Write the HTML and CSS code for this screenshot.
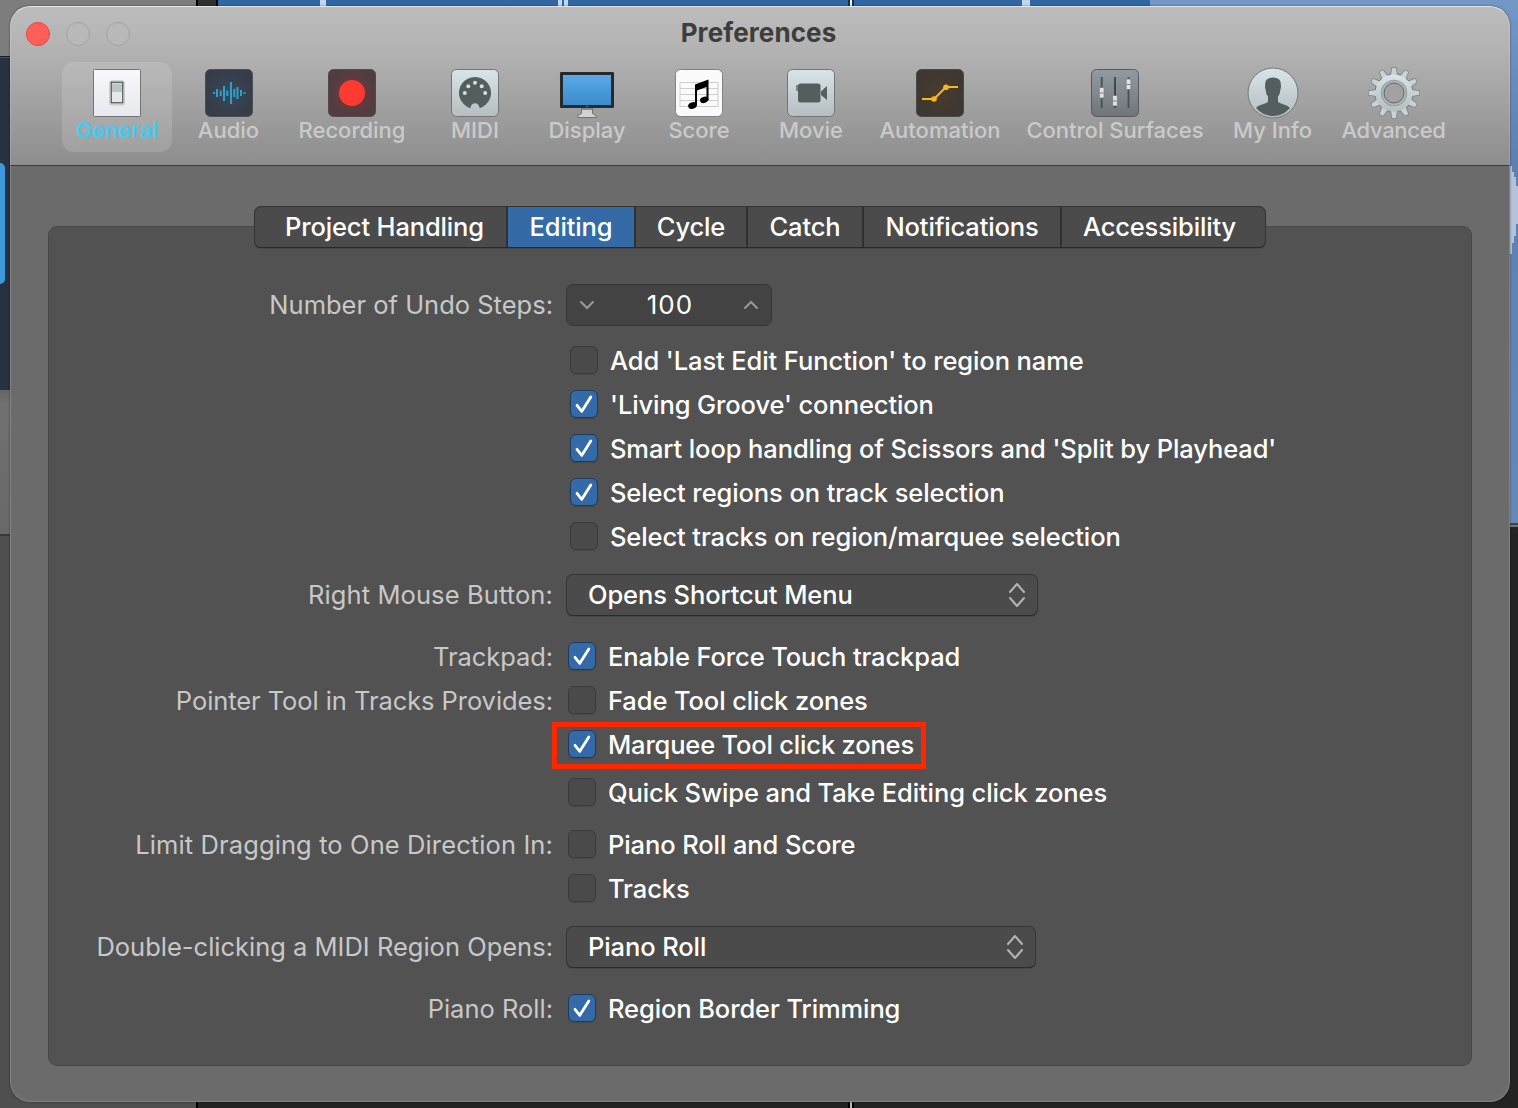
FILE: index.html
```html
<!DOCTYPE html>
<html lang="en">
<head>
<meta charset="utf-8">
<title>Preferences</title>
<link rel="stylesheet" href="styles.css">
</head>
<body>
<svg class="desktop" viewBox="0 0 1518 1108" aria-hidden="true">
  <defs>
    <linearGradient id="deskLeft" x1="0" y1="0" x2="0" y2="1"><stop offset="0" stop-color="#666"/><stop offset=".1" stop-color="#707070"/><stop offset="1" stop-color="#696969"/></linearGradient>
    <linearGradient id="deskRight" x1="0" y1="0" x2="0" y2="1"><stop offset="0" stop-color="#7398c6"/><stop offset=".3" stop-color="#5c80af"/><stop offset="1" stop-color="#6689b6"/></linearGradient>
  </defs>
  <rect width="1518" height="1108" fill="#232323"/>
  <rect width="196" height="56" fill="#7d7d7d"/>
  <rect y="56" width="20" height="334" fill="#263240"/>
  <rect y="56" width="20" height="1" fill="#171d25"/><rect y="57" width="20" height="1" fill="#465362"/>
  <rect x="-10" y="163" width="15" height="121" rx="5" fill="#3f98db"/>
  <rect y="390" width="20" height="144" fill="url(#deskLeft)"/>
  <rect y="534" width="20" height="2" fill="#393939"/>
  <rect y="536" width="196" height="572" fill="#4f4f4f"/>
  <rect x="196" width="2" height="1108" fill="#000"/>
  <rect x="198" width="18" height="30" fill="#303030"/><rect x="216" width="2" height="30" fill="#000"/>
  <rect x="218" width="932" height="30" fill="#3167a3"/>
  <path d="M320 0h6v20h-6zM558 0h4v20h-4zM564 0h4v20h-4zM1022 0h8v20h-8z" fill="#c2d6f0"/>
  <rect x="848" width="6" height="20" fill="#182f4a"/><rect x="850" width="2" height="20" fill="#eee"/>
  <rect x="1150" width="368" height="532" fill="url(#deskRight)"/>
  <path d="M1508 166h4v6h2v5h2v9h2v38h-2v12h-2v7h-2v11h-4z" fill="#b3c2d8"/>
  <rect x="1500" y="523" width="18" height="2" fill="#444"/>
  <rect x="1500" y="525" width="18" height="2" fill="#777"/><rect x="1500" y="527" width="18" height="6" fill="#252525"/>
  <rect x="848" y="1090" width="6" height="18" fill="#000"/><rect x="850" y="1090" width="2" height="18" fill="#bbb"/>
</svg>

<main class="window">
  <header class="toolbar">
    <div class="titlebar">
      <span class="light close"></span><span class="light"></span><span class="light"></span>
      <h1 class="title">Preferences</h1>
    </div>
    <nav class="tools">
      <a class="tool tool-general active">
        <svg class="icon" viewBox="0 0 52 52">
          <defs><linearGradient id="plate" x1="0" y1="0" x2="0" y2="1"><stop offset="0" stop-color="#f9f9fb"/><stop offset="1" stop-color="#e7e8ee"/></linearGradient></defs>
          <rect x="2.5" y="2.5" width="47" height="47" rx="1" fill="url(#plate)" stroke="#747474"/>
          <rect x="18.5" y="13.6" width="15" height="24.6" rx="2" fill="#aaa"/><rect x="19" y="13.8" width="14" height="23.6" rx="1.5" fill="#f2f2f2"/>
          <rect x="20.2" y="15.2" width="11.6" height="20.6" fill="#e4eaeb" stroke="#464a4d" stroke-width="1.2"/><rect x="21" y="16.5" width="10" height="8.5" fill="#bec5c7"/>
        </svg>
        <span class="name">General</span>
      </a>
      <a class="tool tool-audio">
        <svg class="icon" viewBox="0 0 52 52">
          <defs><radialGradient id="navy"><stop offset="0" stop-color="#3b475b"/><stop offset="1" stop-color="#363d48"/></radialGradient></defs>
          <rect x="2.5" y="2.5" width="47" height="47" rx="5" fill="url(#navy)" stroke="#494f57"/>
          <path d="M11 25v2M14 22v8M17.7 23.5v5.5M21 19v15M24.3 23.5v5.5M28 15v22M31.3 22v8M34.5 20v12M38 23v6M41.5 25v2" stroke="#2ba1ca" stroke-width="2"/>
        </svg>
        <span class="name">Audio</span>
      </a>
      <a class="tool tool-recording">
        <svg class="icon" viewBox="0 0 52 52">
          <defs><radialGradient id="wine"><stop offset="0" stop-color="#77383a"/><stop offset="1" stop-color="#503d41"/></radialGradient></defs>
          <rect x="2.5" y="2.5" width="47" height="47" rx="5" fill="url(#wine)" stroke="#56494d"/>
          <circle cx="26" cy="26" r="13" fill="#ff3a30"/>
        </svg>
        <span class="name">Recording</span>
      </a>
      <a class="tool tool-midi">
        <svg class="icon" viewBox="0 0 52 52">
          <defs><linearGradient id="pale" x1="0" y1="0" x2="0" y2="1"><stop offset="0" stop-color="#d8e5e8"/><stop offset="1" stop-color="#b5bdbf"/></linearGradient></defs>
          <rect x="2.5" y="2.5" width="47" height="47" rx="5" fill="url(#pale)" stroke="#707677"/>
          <path d="M21.3 41.2A16 16 0 1 1 30.7 41.2Q29.8 36.2 26 36.2Q22.2 36.2 21.3 41.2Z" fill="#535e5e"/>
          <g fill="#d4dfe1"><circle cx="15.8" cy="26" r="2"/><circle cx="19.3" cy="19.3" r="2"/><circle cx="26" cy="15.8" r="2"/><circle cx="32.7" cy="19.3" r="2"/><circle cx="36.2" cy="26" r="2"/></g>
        </svg>
        <span class="name">MIDI</span>
      </a>
      <a class="tool tool-display">
        <svg class="icon icon-wide" viewBox="0 0 56 52">
          <defs><linearGradient id="screen" x1="0" y1="0" x2="0" y2="1"><stop offset="0" stop-color="#5ba9e9"/><stop offset="1" stop-color="#3a8ccc"/></linearGradient></defs>
          <path d="M22.5 41h11v5.5l4 2.5v1.5h-19V49l4-2.5z" fill="#d2d2d2" stroke="#737373"/>
          <path d="M23 41h10v2H23z" fill="#888"/>
          <rect x="1" y="5" width="54" height="36" rx="1.2" fill="#272a2d"/><rect x="4" y="8" width="48" height="30" fill="url(#screen)"/>
          <circle cx="28" cy="39.5" r=".8" fill="#888"/>
        </svg>
        <span class="name">Display</span>
      </a>
      <a class="tool tool-score">
        <svg class="icon" viewBox="0 0 52 52">
          <rect x="2.5" y="2.5" width="47" height="47" rx="5" fill="#fafafa" stroke="#818181"/>
          <path d="M7 15.5h38M7 21.5h38M7 27.5h38M7 33.5h38M7 39.5h38M7 15v25M45 15v25" stroke="#cecece" fill="none"/>
          <path d="M22 17.5L35.5 12.5V33H33.5V20L24 23.5V38H22Z"/>
          <ellipse cx="19.5" cy="38.5" rx="4.5" ry="3.2" transform="rotate(-20 19.5 38.5)"/><ellipse cx="31.2" cy="32.8" rx="4.3" ry="3.1" transform="rotate(-20 31.2 32.8)"/>
        </svg>
        <span class="name">Score</span>
      </a>
      <a class="tool tool-movie">
        <svg class="icon" viewBox="0 0 52 52">
          <rect x="2.5" y="2.5" width="47" height="47" rx="5" fill="url(#pale)" stroke="#707677"/>
          <path d="M11 18h3v6h-3z" fill="#7d8687"/><rect x="13" y="16.5" width="22.5" height="19" rx="2.5" fill="#535e5e"/><path d="M36 24.5L42 19v14l-6-5z" fill="#535e5e"/>
        </svg>
        <span class="name">Movie</span>
      </a>
      <a class="tool tool-automation">
        <svg class="icon" viewBox="0 0 52 52">
          <defs><radialGradient id="umber"><stop offset="0" stop-color="#4a3a2d"/><stop offset="1" stop-color="#3d3831"/></radialGradient></defs>
          <rect x="2.5" y="2.5" width="47" height="47" rx="5" fill="url(#umber)" stroke="#4b4944"/>
          <path d="M8 32h12L32 20h12" fill="none" stroke="#fdb911" stroke-width="2"/><circle cx="20" cy="32" r="2.8" fill="#fdb911"/><circle cx="32" cy="20.2" r="2.8" fill="#fdb911"/>
        </svg>
        <span class="name">Automation</span>
      </a>
      <a class="tool tool-control">
        <svg class="icon" viewBox="0 0 52 52">
          <defs><linearGradient id="steel" x1="0" y1="0" x2="0" y2="1"><stop offset="0" stop-color="#929ba2"/><stop offset="1" stop-color="#70757b"/></linearGradient></defs>
          <rect x="2.5" y="2.5" width="47" height="47" rx="5" fill="url(#steel)" stroke="#565a5e"/>
          <path d="M12.7 10v31M39.5 10v31" stroke="#4c5054" stroke-width="1.8"/><path d="M26 10v31" stroke="#202224" stroke-width="1.3"/>
          <g fill="#e2e2e2" stroke="#777" stroke-width=".8"><rect x="10.3" y="20.5" width="4.8" height="10.5" rx="1"/><rect x="23.6" y="28.5" width="4.8" height="10.5" rx="1"/><rect x="37.1" y="12" width="4.8" height="10.5" rx="1"/></g>
          <path d="M11 26h3.5M24.2 34h3.5M37.8 17.5h3.5" stroke="#777"/>
        </svg>
        <span class="name">Control Surfaces</span>
      </a>
      <a class="tool tool-info">
        <svg class="icon" viewBox="0 0 52 52">
          <circle cx="26" cy="26" r="25" fill="url(#pale)" stroke="#73797b"/>
          <path d="M9 41C12 37 19 37.5 21 34.5V29.5Q18.8 27 18.6 22.5Q17.6 20 18.2 18Q17.5 10.8 26 10.5Q34.5 10.8 33.8 18Q34.4 20 33.4 22.5Q33.2 27 31 29.5V34.5C33 37.5 40 37 43 41Q36 49 26 49T9 41Z" fill="#535e5e"/>
        </svg>
        <span class="name">My Info</span>
      </a>
      <a class="tool tool-advanced">
        <svg class="icon" viewBox="0 0 52 52">
          <defs><g id="teeth"><path d="M22.7 10L24 1.4Q24 .7 25 .7h2Q28 .7 28 1.4L29.3 10zM22.7 42L24 50.6Q24 51.3 25 51.3h2Q28 51.3 28 50.6L29.3 42z"/></g>
          <g id="cog"><use href="#teeth"/><use href="#teeth" transform="rotate(30 26 26)"/><use href="#teeth" transform="rotate(60 26 26)"/><use href="#teeth" transform="rotate(90 26 26)"/><use href="#teeth" transform="rotate(120 26 26)"/><use href="#teeth" transform="rotate(150 26 26)"/></g></defs>
          <g stroke="#767c7e" stroke-width="1.4" fill="#767c7e"><use href="#cog"/><circle cx="26" cy="26" r="18.8"/></g>
          <use href="#cog" fill="#c8d3d6"/><circle cx="26" cy="26" r="18.6" fill="url(#pale)"/>
          <circle cx="26" cy="26" r="12.6" fill="#aeb7ba" stroke="#9ba5a8" stroke-width="1.4"/>
          <circle cx="26" cy="26" r="10" fill="#a2a2a2" stroke="#626769" stroke-width="1"/>
        </svg>
        <span class="name">Advanced</span>
      </a>
    </nav>
  </header>

  <section class="content">
    <div class="tabs">
      <a class="tab tab-project">Project Handling</a><a class="tab tab-editing selected">Editing</a><a class="tab tab-cycle">Cycle</a><a class="tab tab-catch">Catch</a><a class="tab tab-notes">Notifications</a><a class="tab tab-access">Accessibility</a>
    </div>
    <form class="panel">
      <div class="row">
        <span class="label">Number of Undo Steps:</span>
        <div class="stepper">
          <svg class="chevron" viewBox="0 0 16 10"><path d="M2 2l6 6 6-6"/></svg>
          <span class="value">100</span>
          <svg class="chevron" viewBox="0 0 16 10"><path d="M2 8l6-6 6 6"/></svg>
        </div>
      </div>
      <div class="row gap-12"><span class="label"></span><span class="option inset"><i class="box"></i><span class="text">Add 'Last Edit Function' to region name</span></span></div>
      <div class="row"><span class="label"></span><span class="option inset"><i class="box on"><svg viewBox="0 0 28 28"><path d="M7 15.3l4.8 6L20.8 7"/></svg></i><span class="text">'Living Groove' connection</span></span></div>
      <div class="row"><span class="label"></span><span class="option inset"><i class="box on"><svg viewBox="0 0 28 28"><path d="M7 15.3l4.8 6L20.8 7"/></svg></i><span class="text">Smart loop handling of Scissors and 'Split by Playhead'</span></span></div>
      <div class="row"><span class="label"></span><span class="option inset"><i class="box on"><svg viewBox="0 0 28 28"><path d="M7 15.3l4.8 6L20.8 7"/></svg></i><span class="text">Select regions on track selection</span></span></div>
      <div class="row"><span class="label"></span><span class="option inset"><i class="box"></i><span class="text">Select tracks on region/marquee selection</span></span></div>
      <div class="row gap-14">
        <span class="label wide">Right Mouse Button:</span>
        <div class="select select-mouse"><span class="text">Opens Shortcut Menu</span><svg class="arrows" viewBox="0 0 18 26"><path d="M2 10l7-8 7 8M2 16l7 8 7-8"/></svg></div>
      </div>
      <div class="row gap-18"><span class="label tight">Trackpad:</span><span class="option"><i class="box on"><svg viewBox="0 0 28 28"><path d="M7 15.3l4.8 6L20.8 7"/></svg></i><span class="text">Enable Force Touch trackpad</span></span></div>
      <div class="row"><span class="label tight">Pointer Tool in Tracks Provides:</span><span class="option"><i class="box"></i><span class="text">Fade Tool click zones</span></span></div>
      <div class="row"><span class="label"></span><span class="option marked"><i class="box on"><svg viewBox="0 0 28 28"><path d="M7 15.3l4.8 6L20.8 7"/></svg></i><span class="text">Marquee Tool click zones</span></span></div>
      <div class="row gap-4"><span class="label"></span><span class="option"><i class="box"></i><span class="text">Quick Swipe and Take Editing click zones</span></span></div>
      <div class="row gap-8"><span class="label wide">Limit Dragging to One Direction In:</span><span class="option"><i class="box"></i><span class="text">Piano Roll and Score</span></span></div>
      <div class="row"><span class="label"></span><span class="option"><i class="box"></i><span class="text">Tracks</span></span></div>
      <div class="row gap-14">
        <span class="label">Double-clicking a MIDI Region Opens:</span>
        <div class="select select-region"><span class="text">Piano Roll</span><svg class="arrows" viewBox="0 0 18 26"><path d="M2 10l7-8 7 8M2 16l7 8 7-8"/></svg></div>
      </div>
      <div class="row gap-18"><span class="label">Piano Roll:</span><span class="option"><i class="box on"><svg viewBox="0 0 28 28"><path d="M7 15.3l4.8 6L20.8 7"/></svg></i><span class="text">Region Border Trimming</span></span></div>
    </form>
  </section>
</main>
</body>
</html>
```
FILE: styles.css
```css
*, *::before, *::after { box-sizing: border-box; }
body {
  margin: 0;
  width: 1518px;
  height: 1108px;
  overflow: hidden;
  position: relative;
  background: #232323;
  font-family: Inter, "Liberation Sans", sans-serif;
  font-size: 25.5px;
  color: #fff;
}
.desktop { position: absolute; left: 0; top: 0; width: 1518px; height: 1108px; }

.window {
  position: absolute;
  left: 10px;
  top: 6px;
  width: 1500px;
  height: 1096px;
  border-radius: 20px;
  overflow: hidden;
  background: #6b6b6b;
  box-shadow: 0 0 2px rgba(0, 0, 0, .55);
}
.window::after {
  content: "";
  position: absolute;
  inset: 0;
  border-radius: 20px;
  border: 1px solid rgba(255, 255, 255, .16);
  border-top-color: rgba(255, 255, 255, .6);
  pointer-events: none;
}

.toolbar {
  height: 160px;
  border-bottom: 1px solid #3b3b3b;
  background: linear-gradient(#bdbdbd, #b0b0b0 33%, #8d8d8d);
}
.titlebar { display: flex; align-items: center; gap: 16px; height: 56px; padding-left: 16px; }
.light { width: 24px; height: 24px; border-radius: 50%; background: #b9b9b9; border: 1px solid #a1a1a1; }
.light.close { background: #ff5f58; border-color: #e2463f; }
.title {
  flex: 1;
  margin: -3px 121px 0 -18px;
  text-align: center;
  font-size: 26px;
  font-weight: 700;
  line-height: 30px;
  letter-spacing: .1px;
  color: #3d3d3d;
}
.tools { display: flex; padding-left: 52px; }
.tool {
  height: 90px;
  padding-top: 5px;
  border-radius: 12px;
  display: flex;
  flex-direction: column;
  align-items: center;
}
.tool.active { background: rgba(255, 255, 255, .14); }
.tool-general { width: 110px; }
.tool-audio { width: 113px; }
.tool-recording { width: 134px; }
.tool-midi, .tool-display, .tool-score, .tool-movie { width: 112px; }
.tool-automation { width: 146px; }
.tool-control { width: 204px; }
.tool-info { width: 111px; }
.tool-advanced { width: 131px; }
.icon { width: 52px; height: 52px; flex: none; }
.icon-wide { width: 56px; }
.name {
  margin-top: -3px;
  font-size: 22px;
  font-weight: 500;
  line-height: 28px;
  white-space: nowrap;
  color: #cacaca;
}
.active .name { color: #34d0fb; }
.tool-advanced .name { letter-spacing: -.3px; }

.content { padding: 40px 38px 36px; height: 936px; }
.tabs {
  position: relative;
  z-index: 1;
  display: flex;
  width: 1012px;
  height: 42px;
  margin: 0 0 -22px 206px;
  border: 1px solid #333;
  border-bottom-color: #292929;
  border-radius: 7px;
  overflow: hidden;
  background: #4b4b4b;
  box-shadow: 0 1px 1px rgba(0, 0, 0, .15);
}
.tab {
  display: flex;
  align-items: center;
  justify-content: center;
  padding-bottom: 2px;
  border-right: 2px solid #303030;
  font-weight: 500;
  letter-spacing: -.15px;
  white-space: nowrap;
}
.tab:last-child { border-right: 0; }
.tab.selected { background: #346aa6; }
.tab-project { width: 253px; padding-left: 8px; }
.tab-editing { width: 128px; }
.tab-cycle { width: 112px; }
.tab-catch { width: 116px; }
.tab-notes { width: 198px; }
.tab-access { flex: 1; padding-right: 8px; }

.panel {
  height: 840px;
  margin: 0;
  padding-top: 56px;
  border: 1px solid #484848;
  border-radius: 9px;
  background: #525252;
}
.row { display: flex; align-items: center; height: 44px; white-space: nowrap; }
.gap-4 { margin-top: 4px; }
.gap-8 { margin-top: 8px; }
.gap-12 { margin-top: 12px; }
.gap-14 { margin-top: 14px; }
.gap-18 { margin-top: 18px; }
.label { width: 504px; margin-right: 13px; padding-bottom: 2px; text-align: right; color: #c8c8c8; }
.label.wide { letter-spacing: .11px; }
.label.tight { letter-spacing: -.07px; }
.text { padding-bottom: 2px; letter-spacing: -.1px; }
.option { position: relative; display: flex; align-items: center; gap: 12px; height: 44px; margin-left: 2px; font-weight: 500; }
.option.inset { margin-left: 4px; }
.marked .text { letter-spacing: -.18px; }
.marked::before {
  content: "";
  position: absolute;
  left: -16px;
  top: -1px;
  width: 374px;
  height: 47px;
  border: 5px solid #ff2600;
}
.box {
  position: relative;
  top: -1px;
  width: 28px;
  height: 28px;
  border: 1px solid #3a3a3a;
  border-radius: 6px;
  background: #4a4a4a;
  box-shadow: 0 1px 1px rgba(0, 0, 0, .12);
}
.box.on { background: #346aa8; border-color: #203a5c; }
.box svg { display: block; width: 28px; height: 28px; margin: -1px; }
.box path { fill: none; stroke: #fff; stroke-width: 2.8; stroke-linecap: round; stroke-linejoin: round; }
.stepper {
  display: flex;
  align-items: center;
  justify-content: space-between;
  width: 206px;
  height: 42px;
  padding: 0 12px;
  border: 1px solid #353535;
  border-radius: 7px;
  background: #434343;
}
.value { padding: 0 0 2px 2px; font-size: 26px; letter-spacing: 1px; }
.chevron { width: 16px; height: 10px; fill: none; stroke: #999; stroke-width: 2; stroke-linecap: round; }
.select {
  display: flex;
  align-items: center;
  justify-content: space-between;
  height: 42px;
  padding: 0 11px 0 21px;
  border: 1px solid #363636;
  border-bottom-color: #2b2b2b;
  border-radius: 7px;
  background: #4b4b4b;
  box-shadow: 0 1px 1px rgba(0, 0, 0, .15);
  font-weight: 500;
}
.select-mouse { width: 472px; }
.select-region { width: 470px; }
.arrows { width: 18px; height: 26px; fill: none; stroke: #b4b4b4; stroke-width: 2; stroke-linecap: round; stroke-linejoin: round; }
```
